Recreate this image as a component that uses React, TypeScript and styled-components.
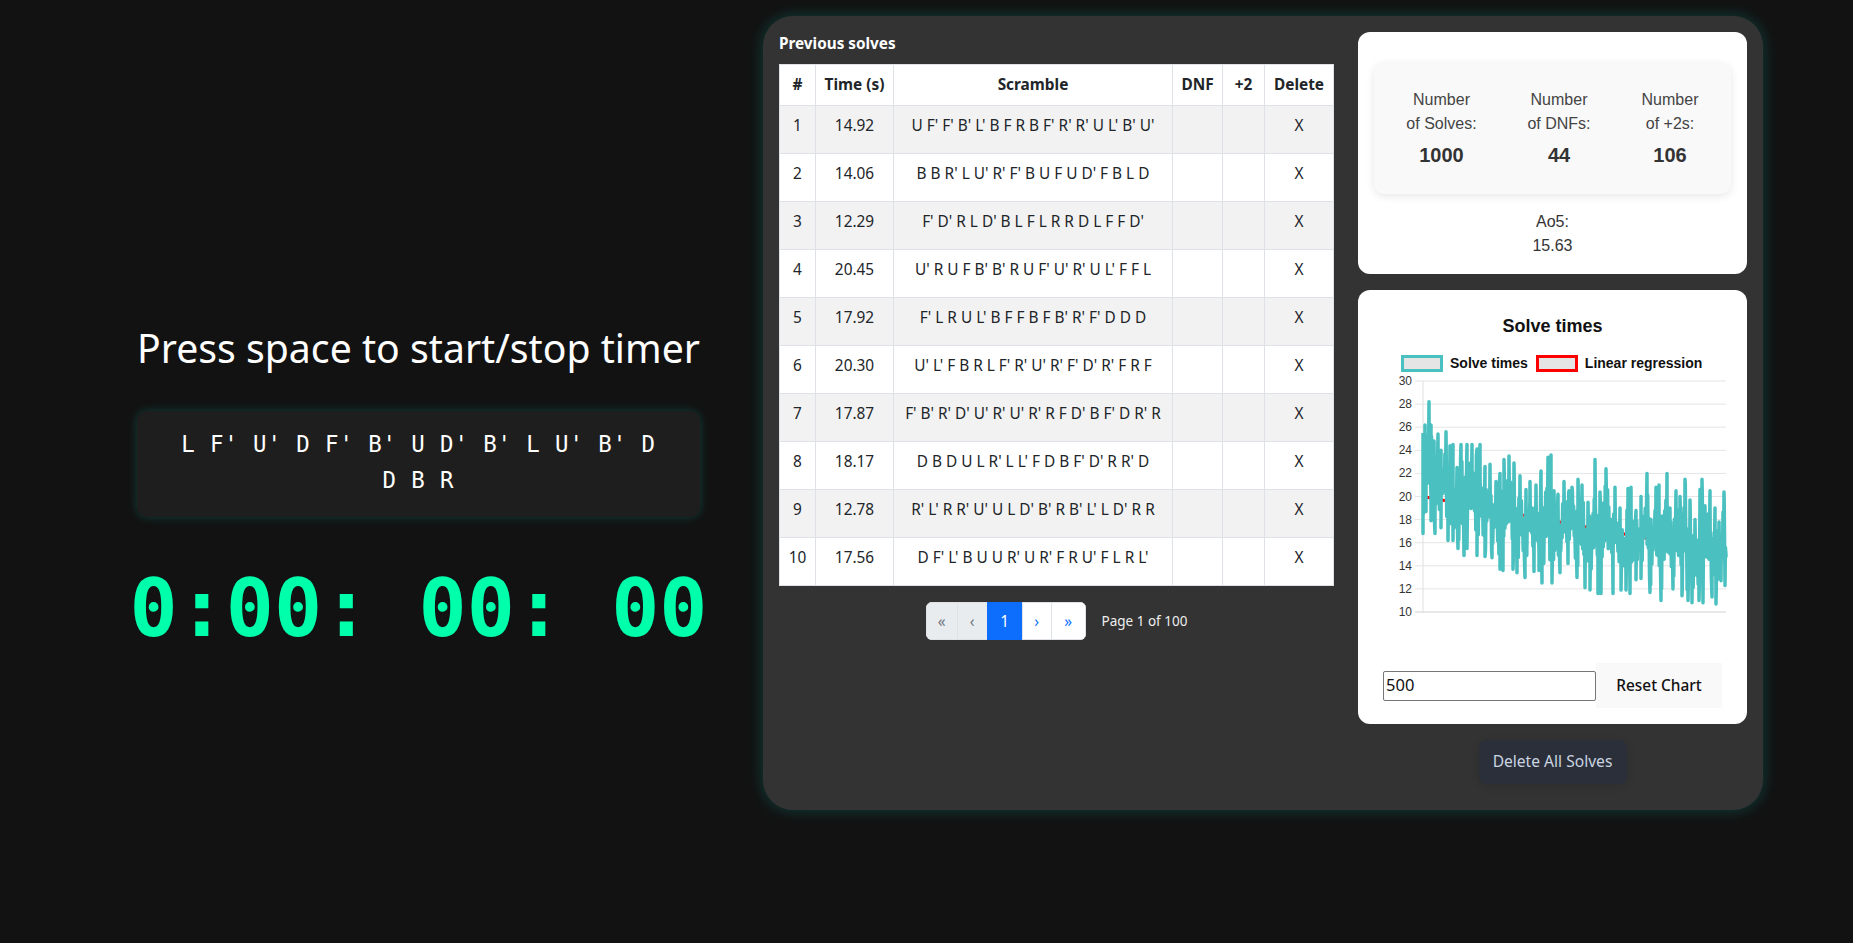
import React from 'react'
import styled, { createGlobalStyle } from 'styled-components'

const UI_FONT = `'Noto Sans', sans-serif`
const CHART_FONT = `'Liberation Sans', Arial, sans-serif`
const MONO_FONT = `'DejaVu Sans Mono', monospace`

const solves = [
    { time: '14.92', scramble: "U F' F' B' L' B F R B F' R' R' U L' B' U'" },
    { time: '14.06', scramble: "B B R' L U' R' F' B U F U D' F B L D" },
    { time: '12.29', scramble: "F' D' R L D' B L F L R R D L F F D'" },
    { time: '20.45', scramble: "U' R U F B' B' R U F' U' R' U L' F F L" },
    { time: '17.92', scramble: "F' L R U L' B F F B F B' R' F' D D D" },
    { time: '20.30', scramble: "U' L' F B R L F' R' U' R' F' D' R' F R F" },
    { time: '17.87', scramble: "F' B' R' D' U' R' U' R' R F D' B F' D R' R" },
    { time: '18.17', scramble: "D B D U L R' L L' F D B F' D' R R' D" },
    { time: '12.78', scramble: "R' L' R R' U' U L D' B' R B' L' L D' R R" },
    { time: '17.56', scramble: "D F' L' B U U R' U R' F R U' F L R L'" },
]

const stats = [
    { first: 'Number', second: 'of Solves:', value: '1000' },
    { first: 'Number', second: 'of DNFs:', value: '44' },
    { first: 'Number', second: 'of +2s:', value: '106' },
]

// envelope of the solve times line, [x in px from plot left, seconds]
const upper: number[][] = [[0,25.5],[2,26.2],[6,28.2],[8,26.2],[11,24.8],[15,25.4],[18,24],[23,25.6],[27,24.4],[30,24.5],[34,22.5],[38,24.5],[44,24.5],[49,24.5],[54,24.1],[57,24.5],[62,22.6],[67,22.8],[73,21.3],[77,22],[81,23.2],[86,23.5],[91,22.9],[97,21.8],[103,20.6],[107,21.3],[113,21],[118,22.2],[125,23.4],[128,23.6],[131,20.5],[135,20.2],[141,21.3],[146,20.5],[149,20.8],[155,21.5],[159,21],[165,19.5],[172,23.2],[177,20.4],[183,22.4],[192,20.8],[197,19],[205,20.7],[208,20.8],[213,18.8],[218,20],[224,22],[228,18],[233,20.8],[236,21],[244,22],[247,19],[253,20.5],[257,20],[262,21.5],[267,19.7],[272,18],[277,20.6],[279,21.5],[282,19.2],[287,20.5],[292,19],[296,17.8],[301,20.4],[303,15]]
const lower: number[][] = [[0,16.8],[3,18.7],[8,17.9],[12,16.8],[18,17.3],[25,16.2],[30,16.2],[35,15.5],[41,14.9],[44,15.5],[54,14.9],[62,14.8],[69,14.7],[77,13.7],[80,13.6],[90,13.7],[94,13.4],[102,13],[111,13.5],[116,13.6],[119,12.5],[129,12.5],[137,13.4],[145,14.2],[154,13],[162,12.1],[167,11.9],[175,11.6],[178,11.6],[190,11.6],[198,11.9],[203,11.9],[207,11.6],[213,12.8],[218,12.9],[227,11.7],[238,11],[250,12],[259,11.4],[265,11],[269,10.8],[276,11],[280,10.8],[289,11.3],[293,10.7],[298,12.7],[302,12.3],[303,14.8]]

const lerp = (knots: number[][], x: number) => {
    for (let i = 1; i < knots.length; i++) {
        if (x <= knots[i][0]) {
            const [x0, y0] = knots[i - 1]
            const [x1, y1] = knots[i]
            return y0 + (y1 - y0) * (x - x0) / (x1 - x0)
        }
    }
    return knots[knots.length - 1][1]
}

// how far a point is from its nearest peak, used to cut notches between peaks
const notch = (knots: number[][], x: number) =>
    Math.min(3.5, Math.min(...knots.map(k => Math.abs(k[0] - x))) * 0.9)

const PLOT_LEFT = 40
const PLOT_WIDTH = 303
const PLOT_TOP = 5
const UNIT = 11.55
const toY = (v: number) => PLOT_TOP + (30 - v) * UNIT

const buildLine = () => {
    let seed = 17
    const rand = () => {
        seed = (seed * 16807) % 2147483647
        return seed / 2147483647
    }
    const points: number[][] = [...upper, ...lower]
    for (let i = 0; i < 500; i++) {
        const x = (i / 499) * PLOT_WIDTH
        const lo = lerp(lower, x) + notch(lower, x)
        const hi = lerp(upper, x) - notch(upper, x)
        // zigzag between the upper and lower half so the band fills up
        const r = i % 2 === 0 ? 0.55 + rand() * 0.45 : rand() * 0.45
        points.push([x, lo + (hi - lo) * r])
    }
    points.sort((a, b) => a[0] - b[0])
    return points.map(([x, v]) => `${(PLOT_LEFT + x).toFixed(1)},${toY(v).toFixed(1)}`).join(' ')
}

const linePoints = buildLine()
const ticks = [30, 28, 26, 24, 22, 20, 18, 16, 14, 12, 10]

const GlobalStyle = createGlobalStyle`
    html, body {
        margin: 0;
        padding: 0;
        background: #121212;
        overflow: hidden;
    }
`

const Page = styled.div`
    display: flex;
    align-items: flex-start;
    width: 1853px;
    height: 943px;
    background: #121212;
    font-family: ${UI_FONT};
`

const TimerSection = styled.section`
    width: 563px;
    margin: 324px 63px 0 137px;
    flex-shrink: 0;
    color: #fff;
`

const Heading = styled.h1`
    margin: 0 0 39px;
    font-size: 39.2px;
    line-height: 48px;
    font-weight: 400;
    text-align: center;
    white-space: nowrap;
`

const ScrambleBox = styled.div`
    box-sizing: border-box;
    height: 106px;
    padding: 15px 32px 19px;
    border-radius: 10px;
    background: #1e1e1e;
    box-shadow: 0 0 10px rgba(0, 255, 220, 0.2);
    font-family: ${MONO_FONT};
    font-size: 22.4px;
    line-height: 36px;
    letter-spacing: 0.9px;
    text-align: center;
`

const Clock = styled.div`
    display: flex;
    justify-content: center;
    margin-top: 44px;
    font-family: ${MONO_FONT};
    font-size: 80px;
    line-height: 96px;
    font-weight: 700;
    color: #00ffaa;
    white-space: pre;
`

const Panel = styled.main`
    box-sizing: border-box;
    display: flex;
    gap: 24px;
    width: 1000px;
    height: 794px;
    margin-top: 16px;
    padding: 16px;
    border-radius: 30px;
    background: #333;
    box-shadow: 0 0 15px rgba(0, 255, 220, 0.2);
`

const SolvesColumn = styled.div`
    width: 555px;
    flex-shrink: 0;
`

const SolvesTitle = styled.h2`
    margin: 0;
    height: 32px;
    font-size: 15.3px;
    line-height: 22px;
    font-weight: 700;
    color: #fff;
`

const Table = styled.table`
    width: 554px;
    table-layout: fixed;
    border-collapse: collapse;
    background: #fff;
    color: #212529;
    font-size: 15.4px;
`

const HeadCell = styled.th<{ $width: number }>`
    box-sizing: border-box;
    width: ${p => p.$width}px;
    height: 41px;
    padding: 0 0 1px;
    border: 1px solid #dee2e6;
    font-weight: 700;
    text-align: center;
`

const Row = styled.tr<{ $striped: boolean }>`
    background: ${p => (p.$striped ? '#f2f2f2' : '#fff')};
`

const Cell = styled.td`
    box-sizing: border-box;
    height: 47px;
    padding: 8px 0 15px;
    border: 1px solid #dee2e6;
    line-height: 24px;
    text-align: center;
    white-space: nowrap;
`

const PagerRow = styled.div`
    display: flex;
    align-items: center;
    justify-content: center;
    gap: 16px;
    margin-top: 16px;
`

const Pager = styled.div`
    display: flex;
    height: 38px;
    border-radius: 6px;
    overflow: hidden;
`

const PageButton = styled.button<{ $state: 'disabled' | 'active' | 'idle'; $width: number }>`
    box-sizing: border-box;
    width: ${p => p.$width}px;
    padding: 0;
    border: 1px solid ${p => (p.$state === 'active' ? '#0d6efd' : '#dee2e6')};
    margin-left: -1px;
    background: ${p => (p.$state === 'disabled' ? '#e9ecef' : p.$state === 'active' ? '#0d6efd' : '#fff')};
    color: ${p => (p.$state === 'disabled' ? '#6c757d' : p.$state === 'active' ? '#fff' : '#0d6efd')};
    font-family: ${UI_FONT};
    font-size: 15.4px;
    &:first-child { margin-left: 0; }
`

const PageLabel = styled.span`
    font-size: 13.5px;
    color: #eee;
`

const SideColumn = styled.div`
    display: flex;
    flex-direction: column;
    width: 389px;
    flex-shrink: 0;
`

const Card = styled.div`
    box-sizing: border-box;
    border-radius: 12px;
    background: #fff;
`

const StatsCard = styled(Card)`
    height: 242px;
    padding: 31px 16px 0;
`

const StatsGrid = styled.div`
    display: grid;
    grid-template-columns: 135px 100px 122px;
    height: 131px;
    box-sizing: border-box;
    padding-top: 25px;
    border-radius: 10px;
    background: #f9f9f9;
    box-shadow: 0 2px 8px rgba(0, 0, 0, 0.1);
    font-family: ${CHART_FONT};
    font-size: 16px;
    line-height: 24px;
    color: #444;
    text-align: center;
`

const StatValue = styled.div`
    margin-top: 7px;
    font-size: 20px;
    font-weight: 700;
    color: #333;
`

const Ao5 = styled.div`
    margin-top: 16px;
    font-family: ${CHART_FONT};
    font-size: 16px;
    line-height: 24px;
    color: #333;
    text-align: center;
`

const ChartCard = styled(Card)`
    height: 434px;
    margin-top: 16px;
    padding: 25px 25px 0;
`

const ChartTitle = styled.div`
    font-family: ${CHART_FONT};
    font-size: 18px;
    line-height: 22px;
    font-weight: 700;
    color: #111;
    text-align: center;
`

const Legend = styled.div`
    display: flex;
    align-items: center;
    height: 16px;
    margin-top: 18px;
    padding-left: 18px;
    font-family: ${CHART_FONT};
    font-size: 14px;
    font-weight: 700;
    color: #111;
`

const LegendSwatch = styled.span<{ $color: string }>`
    box-sizing: border-box;
    width: 42px;
    height: 17px;
    margin-right: 7px;
    border: 3px solid ${p => p.$color};
    background: #e5e5e5;
`

const LegendLabel = styled.span`
    margin-right: 8px;
`

const ChartSvg = styled.svg`
    display: block;
    width: 345px;
    height: 242px;
    margin-top: 5px;
    overflow: visible;
`

const ChartControls = styled.div`
    display: flex;
    align-items: center;
    height: 45px;
    margin-top: 45px;
`

const RangeInput = styled.input`
    box-sizing: border-box;
    width: 213px;
    height: 30px;
    padding: 0 2px 2px;
    border: 1px solid #767676;
    border-radius: 2px;
    font-family: ${UI_FONT};
    font-size: 16.5px;
    color: #111;
`

const ResetButton = styled.button`
    width: 126px;
    height: 45px;
    padding: 0 0 1px;
    border: none;
    background: #f9f9f9;
    font-family: ${UI_FONT};
    font-size: 15.4px;
    font-weight: 500;
    color: #111;
`

const DeleteAll = styled.button`
    align-self: center;
    width: 148px;
    height: 44px;
    margin-top: 16px;
    padding: 0 0 2px;
    border: none;
    border-radius: 8px;
    background: #2a2f3a;
    box-shadow: 0 2px 8px rgba(0, 0, 0, 0.12);
    font-family: ${UI_FONT};
    font-size: 15.6px;
    color: #cbd5e1;
`

function SolveChart() {
    return (
        <ChartSvg viewBox='0 0 345 242'>
            {ticks.map(t => (
                <g key={t}>
                    <line x1={32} x2={343} y1={toY(t)} y2={toY(t)} stroke={t === 10 ? '#d0d0d0' : '#e5e5e5'} strokeWidth={1} />
                    <text x={29} y={toY(t) + 4} textAnchor='end' fontFamily={CHART_FONT} fontSize={12} fill='#333'>{t}</text>
                </g>
            ))}
            <line x1={PLOT_LEFT} x2={PLOT_LEFT} y1={PLOT_TOP} y2={toY(10) + 1} stroke='#e0e0e0' strokeWidth={1} />
            <line x1={PLOT_LEFT} x2={PLOT_LEFT + PLOT_WIDTH} y1={toY(20)} y2={toY(15.1)} stroke='#ff0000' strokeWidth={3} />
            <polyline points={linePoints} fill='none' stroke='#4bc0c0' strokeWidth={3.5} strokeLinejoin='round' />
        </ChartSvg>
    )
}

function App() {
    return (
        <Page>
            <GlobalStyle />
            <TimerSection>
                <Heading>Press space to start/stop timer</Heading>
                <ScrambleBox>L F' U' D F' B' U D' B' L U' B' D D B R</ScrambleBox>
                <Clock>0:00: 00: 00</Clock>
            </TimerSection>
            <Panel>
                <SolvesColumn>
                    <SolvesTitle>Previous solves</SolvesTitle>
                    <Table>
                        <thead>
                            <tr>
                                <HeadCell $width={36}>#</HeadCell>
                                <HeadCell $width={78}>Time (s)</HeadCell>
                                <HeadCell $width={279}>Scramble</HeadCell>
                                <HeadCell $width={50}>DNF</HeadCell>
                                <HeadCell $width={42}>+2</HeadCell>
                                <HeadCell $width={69}>Delete</HeadCell>
                            </tr>
                        </thead>
                        <tbody>
                            {solves.map((s, i) => (
                                <Row key={s.time} $striped={i % 2 === 0}>
                                    <Cell>{i + 1}</Cell>
                                    <Cell>{s.time}</Cell>
                                    <Cell>{s.scramble}</Cell>
                                    <Cell />
                                    <Cell />
                                    <Cell>X</Cell>
                                </Row>
                            ))}
                        </tbody>
                    </Table>
                    <PagerRow>
                        <Pager>
                            <PageButton $state='disabled' $width={32}>«</PageButton>
                            <PageButton $state='disabled' $width={31}>‹</PageButton>
                            <PageButton $state='active' $width={36}>1</PageButton>
                            <PageButton $state='idle' $width={30}>›</PageButton>
                            <PageButton $state='idle' $width={35}>»</PageButton>
                        </Pager>
                        <PageLabel>Page 1 of 100</PageLabel>
                    </PagerRow>
                </SolvesColumn>
                <SideColumn>
                    <StatsCard>
                        <StatsGrid>
                            {stats.map(s => (
                                <div key={s.second}>
                                    {s.first}<br />{s.second}
                                    <StatValue>{s.value}</StatValue>
                                </div>
                            ))}
                        </StatsGrid>
                        <Ao5>Ao5:<br />15.63</Ao5>
                    </StatsCard>
                    <ChartCard>
                        <ChartTitle>Solve times</ChartTitle>
                        <Legend>
                            <LegendSwatch $color='#4bc0c0' />
                            <LegendLabel>Solve times</LegendLabel>
                            <LegendSwatch $color='#ff0000' />
                            <LegendLabel>Linear regression</LegendLabel>
                        </Legend>
                        <SolveChart />
                        <ChartControls>
                            <RangeInput defaultValue='500' />
                            <ResetButton>Reset Chart</ResetButton>
                        </ChartControls>
                    </ChartCard>
                    <DeleteAll>Delete All Solves</DeleteAll>
                </SideColumn>
            </Panel>
        </Page>
    )
}

export default App
